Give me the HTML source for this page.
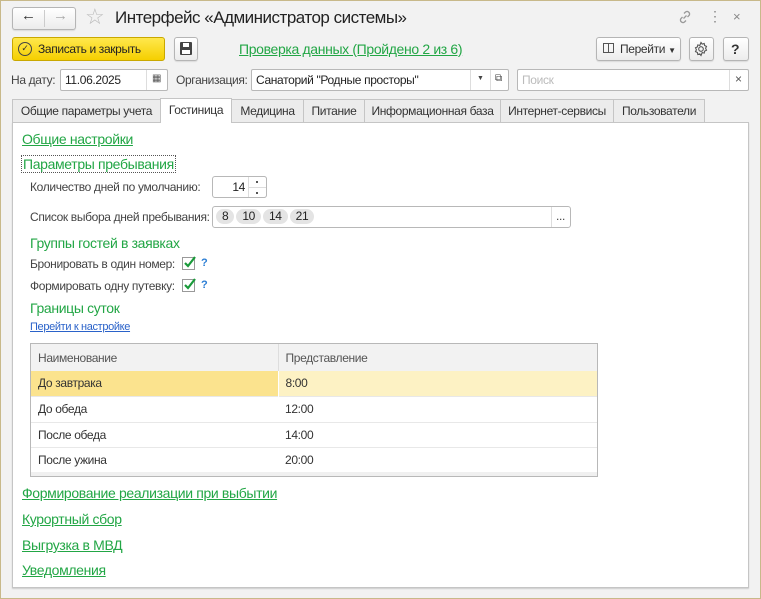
<!DOCTYPE html>
<html><head><meta charset="utf-8"><style>
*{box-sizing:border-box;margin:0;padding:0}
body{width:761px;height:599px;overflow:hidden;background:#f2f2f2;font-family:"Liberation Sans",sans-serif;font-size:12px;color:#333;position:relative;letter-spacing:-0.35px}
.frame{position:absolute;left:0;top:0;width:761px;height:599px;border:1px solid #c8b98a}
.a{position:absolute;white-space:nowrap}
.btn{position:absolute;border:1px solid #b5b5b5;border-radius:3px;background:linear-gradient(#fff,#ececec);box-shadow:0 1px 1px rgba(0,0,0,.1)}
.inp{position:absolute;border:1px solid #b8b8b8;border-radius:2px;background:#fff}
.tab{position:absolute;top:99px;height:23px;border:1px solid #c5c5c5;border-bottom:none;background:#ececec;text-align:center;line-height:22px;color:#333}
.g{color:#22a645;font-size:14px}
.gl{color:#22a645;font-size:14px;text-decoration:underline}
.chk{position:absolute;width:13px;height:13px;border:1px solid #999;background:#fff}
.q{position:absolute;color:#2a7dd4;font-weight:bold;font-size:11px}
.chip{display:inline-block;background:#e4e4e4;border-radius:8px;padding:0 6px;height:15px;line-height:15px;margin-right:2px}
table{border-collapse:collapse}
</style></head><body>
<div class="frame"></div>
<!-- title bar -->
<div class="btn" style="left:12px;top:7px;width:64px;height:23px"></div>
<div class="a" style="left:44px;top:10px;width:1px;height:17px;background:#ccc"></div>
<div class="a" style="left:21px;top:7px;font-size:15px;color:#333">&#8592;</div>
<div class="a" style="left:53px;top:7px;font-size:15px;color:#aaa">&#8594;</div>
<div class="a" style="left:85px;top:4px;font-size:22px;color:#bbb">&#9734;</div>
<div class="a" style="left:115px;top:8px;font-size:17px;color:#222;letter-spacing:-0.5px">Интерфейс «Администратор системы»</div>
<svg class="a" style="left:677px;top:9px" width="16" height="16" viewBox="0 0 16 16" fill="none" stroke="#999" stroke-width="1.3"><path d="M6.5 9.5l3-3M7 4.5l1.5-1.5a2.5 2.5 0 013.5 3.5L10.5 8M9 11.5L7.5 13A2.5 2.5 0 014 9.5L5.5 8"/></svg>
<div class="a" style="left:708px;top:8px;font-size:14px;color:#888">&#8942;</div>
<div class="a" style="left:733px;top:9px;font-size:13px;color:#888">×</div>
<!-- row 2 -->
<div class="a" style="left:12px;top:37px;width:153px;height:24px;border:1px solid #c9a800;border-radius:3px;background:linear-gradient(#ffe84d,#f5cf00)"></div>
<div class="a" style="left:18px;top:42px;width:14px;height:14px;border:1.5px solid #444;border-radius:50%;font-size:9px;line-height:11px;text-align:center">✓</div>
<div class="a" style="left:38px;top:42px;color:#222">Записать и закрыть</div>
<div class="btn" style="left:174px;top:37px;width:24px;height:24px"></div>
<div class="a" style="left:180px;top:42px;width:12px;height:13px;background:#444;border-radius:1px"></div>
<div class="a" style="left:183px;top:43px;width:6px;height:4px;background:#fff"></div>
<div class="a" style="left:182px;top:50px;width:8px;height:4px;background:#fff"></div>
<div class="a" style="left:239px;top:41px" ><span class="gl">Проверка данных (Пройдено 2 из 6)</span></div>
<div class="btn" style="left:596px;top:37px;width:85px;height:24px"></div>
<div class="a" style="left:603px;top:43px;width:11px;height:10px;border:1px solid #555"></div>
<div class="a" style="left:608px;top:43px;width:1px;height:10px;background:#555"></div>
<div class="a" style="left:620px;top:42px;color:#333">Перейти <span style="font-size:8px">▼</span></div>
<div class="btn" style="left:689px;top:37px;width:25px;height:24px"></div>
<svg class="a" style="left:693px;top:41px" width="16" height="16" viewBox="0 0 16 16" fill="none" stroke="#555" stroke-width="1.1"><circle cx="8" cy="8" r="2.3"/><path d="M8 1.5l1.2 1.6 2-.6.4 2 1.9.9-.9 1.9.9 1.9-1.9.9-.4 2-2-.6L8 14.5l-1.2-1.6-2 .6-.4-2-1.9-.9.9-1.9-.9-1.9 1.9-.9.4-2 2 .6z"/></svg>
<div class="btn" style="left:723px;top:37px;width:26px;height:24px"></div>
<div class="a" style="left:731px;top:41px;font-size:14px;font-weight:bold;color:#333">?</div>
<!-- row 3 -->
<div class="a" style="left:11px;top:73px;color:#444">На дату:</div>
<div class="inp" style="left:60px;top:69px;width:108px;height:22px"></div>
<div class="a" style="left:65px;top:73px;color:#222">11.06.2025</div>
<div class="a" style="left:146px;top:70px;width:1px;height:20px;background:#ddd"></div>
<div class="a" style="left:152px;top:73px;font-size:10px;color:#555">▦</div>
<div class="a" style="left:176px;top:73px;color:#444">Организация:</div>
<div class="inp" style="left:251px;top:69px;width:258px;height:22px"></div>
<div class="a" style="left:256px;top:73px;color:#222">Санаторий "Родные просторы"</div>
<div class="a" style="left:470px;top:70px;width:1px;height:20px;background:#ddd"></div>
<div class="a" style="left:490px;top:70px;width:1px;height:20px;background:#ddd"></div>
<div class="a" style="left:477px;top:75px;font-size:7px;color:#444">▼</div>
<div class="a" style="left:495px;top:73px;font-size:10px;color:#444">⧉</div>
<div class="inp" style="left:517px;top:69px;width:232px;height:22px"></div>
<div class="a" style="left:522px;top:73px;color:#bbb">Поиск</div>
<div class="a" style="left:729px;top:70px;width:1px;height:20px;background:#ddd"></div>
<div class="a" style="left:735px;top:72px;color:#555">×</div>
<!-- tabs -->
<div class="tab" style="left:12px;width:149px">Общие параметры учета</div>
<div class="tab" style="left:160px;width:72px;top:98px;height:25px;background:#fff;z-index:2">Гостиница</div>
<div class="tab" style="left:231px;width:73px">Медицина</div>
<div class="tab" style="left:303px;width:62px">Питание</div>
<div class="tab" style="left:364px;width:137px">Информационная база</div>
<div class="tab" style="left:500px;width:114px">Интернет-сервисы</div>
<div class="tab" style="left:613px;width:92px">Пользователи</div>
<!-- panel -->
<div class="a" style="left:12px;top:122px;width:737px;height:466px;background:#fff;border:1px solid #c5c5c5;box-shadow:0 1px 1px #ccc"></div>
<div class="a" style="left:22px;top:131px"><span class="gl">Общие настройки</span></div>
<div class="a" style="left:21px;top:155px;border:1px dotted #555;padding:0 1px"><span class="gl" style="text-decoration:none">Параметры пребывания</span></div>
<div class="a" style="left:30px;top:180px;color:#444">Количество дней по умолчанию:</div>
<div class="inp" style="left:241px;top:176px;width:26px;height:22px;border-radius:3px;width:26px"></div>
<div class="inp" style="left:212px;top:176px;width:55px;height:22px;border-radius:3px"></div>
<div class="a" style="left:222px;top:180px;width:23px;text-align:right;color:#222">14</div>
<div class="a" style="left:248px;top:177px;width:1px;height:20px;background:#ddd"></div>
<div class="a" style="left:249px;top:187px;width:17px;height:1px;background:#ddd"></div>
<div class="a" style="left:256px;top:181px;width:2px;height:2px;background:#555"></div>
<div class="a" style="left:256px;top:192px;width:2px;height:2px;background:#555"></div>
<div class="a" style="left:30px;top:210px;color:#444">Список выбора дней пребывания:</div>
<div class="inp" style="left:212px;top:206px;width:359px;height:22px;border-radius:3px"></div>
<div class="a" style="left:216px;top:209px;color:#222;font-size:12px"><span class="chip">8</span><span class="chip">10</span><span class="chip">14</span><span class="chip">21</span></div>
<div class="a" style="left:551px;top:207px;width:1px;height:20px;background:#ddd"></div>
<div class="a" style="left:556px;top:209px;color:#444">...</div>
<div class="a g" style="left:30px;top:235px">Группы гостей в заявках</div>
<div class="a" style="left:30px;top:257px;color:#444">Бронировать в один номер:</div>
<div class="chk" style="left:182px;top:257px"></div>
<svg class="a" style="left:182px;top:254px" width="16" height="16"><path d="M3 9l3 3 7-9" fill="none" stroke="#1a9a3a" stroke-width="2.2"/></svg>
<div class="q" style="left:201px;top:257px">?</div>
<div class="a" style="left:30px;top:279px;color:#444">Формировать одну путевку:</div>
<div class="chk" style="left:182px;top:279px"></div>
<svg class="a" style="left:182px;top:276px" width="16" height="16"><path d="M3 9l3 3 7-9" fill="none" stroke="#1a9a3a" stroke-width="2.2"/></svg>
<div class="q" style="left:201px;top:279px">?</div>
<div class="a g" style="left:30px;top:300px">Границы суток</div>
<div class="a" style="left:30px;top:321px;color:#2a62c9;font-size:11px;text-decoration:underline">Перейти к настройке</div>
<!-- table -->
<div class="a" style="left:30px;top:343px;width:568px;height:134px;border:1px solid #b8b8b8;background:#fff">
<table style="width:566px;font-size:12px;color:#333">
<tr style="height:27px;background:#f2f2f2"><td style="width:247px;padding-left:7px;border-right:1px solid #ddd;color:#555">Наименование</td><td style="padding-left:7px;color:#555">Представление</td></tr>
<tr style="height:25px;background:#fdf2c4"><td style="padding-left:7px;background:#fbe38e;border-right:1px solid #fff">До завтрака</td><td style="padding-left:7px">8:00</td></tr>
<tr style="height:26px;border-top:1px solid #e8e8e8"><td style="padding-left:7px">До обеда</td><td style="padding-left:7px">12:00</td></tr>
<tr style="height:25px;border-top:1px solid #e8e8e8"><td style="padding-left:7px">После обеда</td><td style="padding-left:7px">14:00</td></tr>
<tr style="height:25px;border-top:1px solid #e8e8e8"><td style="padding-left:7px">После ужина</td><td style="padding-left:7px">20:00</td></tr>
</table>
<div style="position:absolute;left:0;bottom:0;width:566px;height:4px;background:#f0f0f0"></div>
</div>
<div class="a" style="left:22px;top:485px"><span class="gl">Формирование реализации при выбытии</span></div>
<div class="a" style="left:22px;top:511px"><span class="gl">Курортный сбор</span></div>
<div class="a" style="left:22px;top:537px"><span class="gl">Выгрузка в МВД</span></div>
<div class="a" style="left:22px;top:562px"><span class="gl">Уведомления</span></div>
</body></html>
